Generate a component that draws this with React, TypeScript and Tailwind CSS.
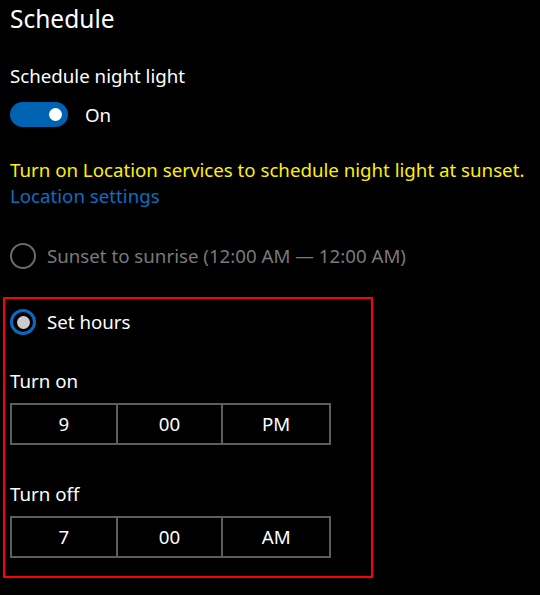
import React from "react"

const font = { fontFamily: '"Noto Sans", "Open Sans", sans-serif' }

function Radio({ checked, disabled }: { checked?: boolean; disabled?: boolean }) {
  if (checked) {
    return (
      <span className="flex h-[26px] w-[26px] shrink-0 items-center justify-center rounded-full border-[3px] border-[#0a6ac0]">
        <span className="h-[13px] w-[13px] rounded-full bg-[#cccccc]" />
      </span>
    )
  }
  return (
    <span
      className={`h-[26px] w-[26px] shrink-0 rounded-full border-2 ${disabled ? "border-[#6a6a6a]" : "border-white"}`}
    />
  )
}

function TimePicker({ parts }: { parts: string[] }) {
  return (
    <div className="grid h-[42px] w-[321px] grid-cols-3 divide-x-2 divide-[#5e5e5e] border-2 border-[#5e5e5e]">
      {parts.map((p) => (
        <div key={p} className="flex items-center justify-center text-[18.7px] text-white">
          {p}
        </div>
      ))}
    </div>
  )
}

export default function App() {
  return (
    <div className="h-[595px] w-[540px] overflow-hidden bg-black pl-[10px] text-white" style={font}>
      <h1 className="text-[24.5px] leading-[37px]">Schedule</h1>

      <div className="mt-[25px] text-[18.7px] leading-[28px]">Schedule night light</div>

      {/* toggle */}
      <div className="mt-[12px] flex items-center gap-[17px]">
        <div className="flex h-[25px] w-[58px] items-center justify-end rounded-full bg-[#0063b1] pr-[6px]">
          <span className="h-[13px] w-[13px] rounded-full bg-white" />
        </div>
        <span className="text-[18.7px] leading-[25px]">On</span>
      </div>

      <div className="mt-[30px] text-[18.7px] leading-[26px]">
        <div className="text-[#fff000]">Turn on Location services to schedule night light at sunset.</div>
        <div className="text-[#0a6ec4]">Location settings</div>
      </div>

      <div className="mt-[34px] flex items-center gap-[11px]">
        <Radio disabled />
        <span className="text-[18.7px] leading-[26px] text-[#7a7a7a]">Sunset to sunrise (12:00 AM — 12:00 AM)</span>
      </div>

      <div className="-ml-[7px] mt-[28px] h-[281px] w-[370px] border-2 border-[#ff0000] pl-[5px] pt-[10px]">
        <div className="flex items-center gap-[11px]">
          <Radio checked />
          <span className="text-[18.7px] leading-[26px]">Set hours</span>
        </div>

        <div className="mt-[33px] text-[18.7px] leading-[26px]">Turn on</div>
        <div className="mt-[9px]">
          <TimePicker parts={["9", "00", "PM"]} />
        </div>

        <div className="mt-[36px] text-[18.7px] leading-[26px]">Turn off</div>
        <div className="mt-[9px]">
          <TimePicker parts={["7", "00", "AM"]} />
        </div>
      </div>
    </div>
  )
}
